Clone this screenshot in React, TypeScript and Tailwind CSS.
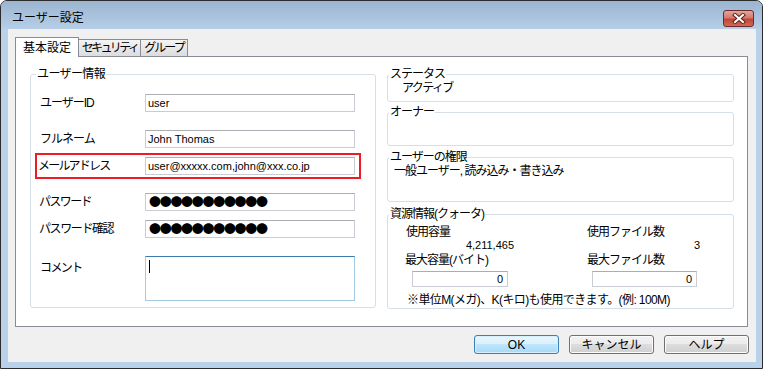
import React from 'react';

const FONT = "font-['Liberation_Sans','Noto_Sans_CJK_JP',sans-serif]";

const TextBox: React.FC<{ value?: string; width: string; height?: string; align?: 'left' | 'right' }> = ({ value = '', width, height = 'h-[18px]', align = 'left' }) => (
  <div
    className={`${width} ${height} flex items-center border border-[#c9ccd2] border-t-[#abadb3] bg-white text-[11px] tracking-normal ${
      align === 'right' ? 'justify-end pr-[4px]' : 'pl-[2px]'
    }`}
  >
    {value}
  </div>
);

const Dots: React.FC = () => (
  <div className="flex h-[18px] w-[210px] items-center border border-[#c9ccd2] border-t-[#abadb3] bg-white pl-[3px]">
    <span className="font-['Noto_Sans_CJK_JP',sans-serif] text-[12px] leading-none tracking-[-1.3px]">●●●●●●●●●●●</span>
  </div>
);

const Group: React.FC<{ title: string; className: string; legendClass?: string; children?: React.ReactNode }> = ({
  title,
  className,
  legendClass = 'ml-[1px] px-[1px]',
  children,
}) => (
  <fieldset className={`rounded-[3px] border border-[#d5dfe5] ${className}`}>
    <legend className={`text-[12px] leading-[14px] ${legendClass}`}>{title}</legend>
    {children}
  </fieldset>
);

const Button: React.FC<{ label: string; primary?: boolean }> = ({ label, primary }) => (
  <div
    className={`flex h-[19px] w-[85px] items-center justify-center rounded-[3px] border text-[12px] ${
      primary
        ? 'border-[#3c7fb1] bg-[linear-gradient(to_bottom,#eaf6fd_0%,#d9f0fc_50%,#bee6fd_50%,#a7d9f5_100%)] shadow-[inset_0_0_0_1px_#d8effc]'
        : 'border-[#707070] bg-[linear-gradient(to_bottom,#f2f2f2_0%,#ebebeb_50%,#dddddd_50%,#cfcfcf_100%)] shadow-[inset_0_0_0_1px_#fcfcfc]'
    }`}
  >
    {label}
  </div>
);

export default function App() {
  return (
    <div className={`${FONT} h-[369px] w-[763px] text-black`}>
      <div className="flex h-full flex-col overflow-hidden rounded-t-[7px] border border-[#2b2b2b] bg-[#b9d1ea]">
        {/* title bar */}
        <div className="flex h-[28px] shrink-0 items-center justify-between bg-gradient-to-b from-[#9bb5d1] to-[#b6cee7] pl-[11px] pr-[8px] pt-[6px]">
          <span className="text-[12px] leading-[14px]">ユーザー設定</span>
          <div className="flex h-[17px] w-[31px] items-center justify-center rounded-[3px] border border-[#6b2b27] bg-[linear-gradient(to_bottom,#e3a59c_0%,#d47a6e_45%,#c24535_55%,#cf6a55_100%)]">
            <svg width="14" height="11" viewBox="0 0 14 11">
              <path d="M3 2 L11 9 M11 2 L3 9" stroke="#5a2420" strokeWidth="4" strokeLinecap="square" />
              <path d="M3 2 L11 9 M11 2 L3 9" stroke="#ffffff" strokeWidth="2" strokeLinecap="square" />
            </svg>
          </div>
        </div>

        {/* client area */}
        <div className="mb-[6px] ml-[7px] mr-[6px] flex flex-1 flex-col bg-[#f0f0f0] px-[7px] pt-[8px]">
          {/* tabs */}
          <div className="flex h-[19px] items-end whitespace-nowrap text-[12px]">
            <div className="relative z-10 -mb-px flex h-[20px] w-[64px] items-center justify-center border border-b-0 border-[#898c95] bg-white">
              基本設定
            </div>
            <div className="flex h-[17px] w-[62px] items-center justify-center border border-b-0 border-l-0 border-[#898c95] bg-gradient-to-b from-[#f4f4f4] to-[#dcdcdc] tracking-[-2.6px]">
              セキュリティ
            </div>
            <div className="flex h-[17px] w-[47px] items-center justify-center border border-b-0 border-l-0 border-[#898c95] bg-gradient-to-b from-[#f4f4f4] to-[#dcdcdc] tracking-[-2px]">
              グループ
            </div>
          </div>

          {/* panel */}
          <div className="mr-[1px] flex h-[271px] gap-[11px] border border-[#898c95] bg-white pl-[14px] pt-[10px] tracking-[-1px]">
            {/* left */}
            <Group title="ユーザー情報" className="h-[241px] w-[346px]" legendClass="ml-[5px] px-[1px] tracking-[-0.6px]">
              <div className="flex flex-col text-[12px]">
                <div className="mt-[13px] flex h-[18px] items-center pl-[9px]">
                  <span className="w-[105px]">ユーザーID</span>
                  <TextBox value="user" width="w-[210px]" />
                </div>
                <div className="mt-[18px] flex h-[18px] items-center pl-[9px]">
                  <span className="w-[105px]">フルネーム</span>
                  <TextBox value="John Thomas" width="w-[210px]" />
                </div>
                <div className="ml-[4px] mt-[5px] flex h-[26px] w-[326px] items-center border-2 border-[#ec1c24] pl-[1px]">
                  <span className="w-[107px] tracking-[-1.8px]">メールアドレス</span>
                  <TextBox value="user@xxxxx.com,john@xxx.co.jp" width="w-[210px]" />
                </div>
                <div className="mt-[14px] flex h-[18px] items-center pl-[8px]">
                  <span className="w-[106px] tracking-[-1.6px]">パスワード</span>
                  <Dots />
                </div>
                <div className="mt-[9px] flex h-[18px] items-center pl-[8px]">
                  <span className="w-[106px] tracking-[-1.4px]">パスワード確認</span>
                  <Dots />
                </div>
                <div className="mt-[18px] flex items-start pl-[9px]">
                  <span className="mt-[3px] w-[105px] tracking-[-1.6px]">コメント</span>
                  <div className="h-[45px] w-[210px] border border-[#a4c9e3] border-t-[#3d7bad] bg-white pl-[3px] pt-[3px]">
                    <div className="h-[13px] w-px bg-black" />
                  </div>
                </div>
              </div>
            </Group>

            {/* right */}
            <div className="flex w-[347px] flex-col text-[12px]">
              <Group title="ステータス" className="h-[35px]">
                <div className="pl-[14px] leading-[14px] tracking-[-1.6px]">アクティブ</div>
              </Group>
              <Group title="オーナー" className="mt-[3px] h-[41px]" />
              <Group title="ユーザーの権限" className="mt-[4px] h-[52px]">
                <div className="pl-[6px] leading-[14px]">一般ユーザー, 読み込み・書き込み</div>
              </Group>
              <Group title="資源情報(クォータ)" className="mt-[5px] h-[102px]">
                <div className="flex flex-col pl-[18px]">
                  <div className="mt-[4px] grid h-[14px] grid-cols-[181px_113px] items-center leading-[14px]">
                    <span>使用容量</span>
                    <span>使用ファイル数</span>
                  </div>
                  <div className="grid h-[13px] grid-cols-[181px_113px] items-center text-[11px] leading-[13px] tracking-normal">
                    <span className="w-[108px] text-right">4,211,465</span>
                    <span className="text-right">3</span>
                  </div>
                  <div className="grid h-[15px] grid-cols-[181px_113px] items-center leading-[14px]">
                    <span className="-ml-px">最大容量(バイト)</span>
                    <span>最大ファイル数</span>
                  </div>
                  <div className="mt-[4px] grid h-[16px] grid-cols-[181px_113px]">
                    <div className="pl-[6px]">
                      <TextBox value="0" width="w-[96px]" height="h-[16px]" align="right" />
                    </div>
                    <div className="pl-[5px]">
                      <TextBox value="0" width="w-[105px]" height="h-[16px]" align="right" />
                    </div>
                  </div>
                  <div className="mt-[6px] h-[14px] whitespace-nowrap pl-px leading-[14px] tracking-[-0.6px]">
                    ※単位M(メガ)、K(キロ)も使用できます。(例: 100M)
                  </div>
                </div>
              </Group>
            </div>
          </div>

          {/* buttons */}
          <div className="mt-[8px] flex justify-end gap-[10px]">
            <Button label="OK" primary />
            <Button label="キャンセル" />
            <Button label="ヘルプ" />
          </div>
        </div>
      </div>
    </div>
  );
}
